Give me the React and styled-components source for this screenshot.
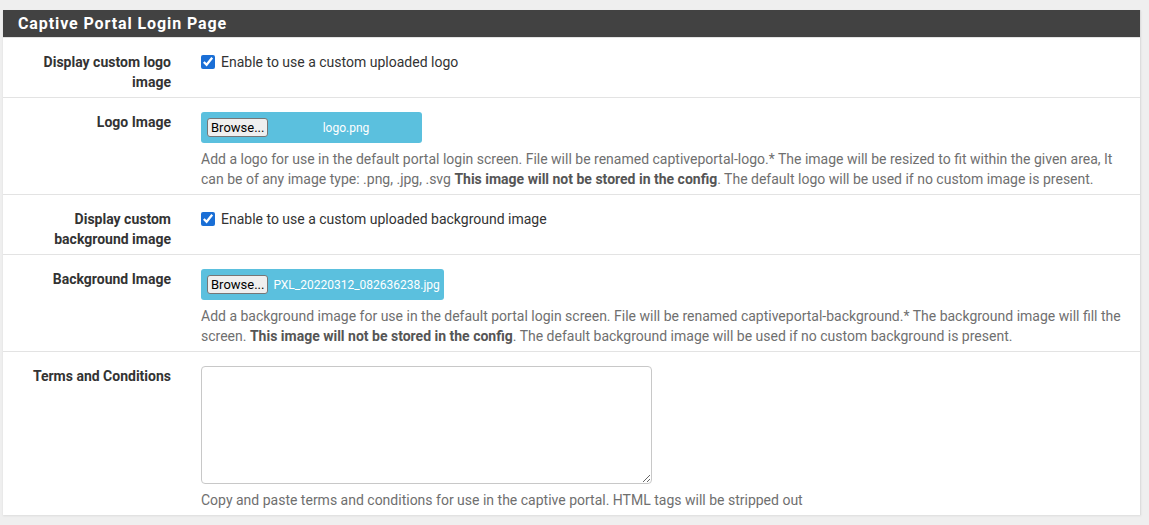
import React from 'react';
import styled, { createGlobalStyle } from 'styled-components';

const GlobalStyle = createGlobalStyle`
  body {
    margin: 0;
    background: #efefef;
    font-family: Roboto, "Liberation Sans", sans-serif;
    font-size: 14px;
    color: #333;
  }
`;

const Page = styled.div`
  padding: 10px 8px 10px 3px;
`;

const Panel = styled.div`
  background: #fff;
  border-right: 1px solid #ddd;
  box-shadow: 0 1px 2px rgba(0, 0, 0, 0.08);
`;

const Heading = styled.div`
  background: #424242;
  color: #fff;
  height: 27px;
  display: flex;
  align-items: center;
  padding-left: 15px;
  font-size: 16px;
  font-weight: 700;
  letter-spacing: 0.9px;
`;

const Row = styled.div`
  display: grid;
  grid-template-columns: 183px 1fr;
  padding: 14px 0 5px;
  border-top: 1px solid #e3e3e3;
`;

const Label = styled.div`
  text-align: right;
  font-weight: 700;
  line-height: 20px;
  padding: 0 15px 0 20px;
  color: #333;
`;

const Content = styled.div`
  padding: 0 10px 0 15px;
  line-height: 20px;
`;

const CheckLabel = styled.label`
  display: flex;
  align-items: center;
  gap: 6px;
  color: #333;

  input {
    margin: 0;
    width: 14px;
    height: 14px;
    accent-color: #1a6fd6;
  }
`;

const FileBox = styled.div`
  display: flex;
  width: fit-content;
  align-items: center;
  box-sizing: border-box;
  background: #5bc0de;
  border-radius: 3px;
  padding: 0 4px 0 6px;
  height: 31px;
`;

const Browse = styled.span`
  display: inline-block;
  background: #efefef;
  border: 1px solid #767676;
  border-radius: 3px;
  color: #000;
  font-size: 13px;
  line-height: 17px;
  padding: 0 3px;
`;

const FileName = styled.span`
  min-width: 145px;
  padding-left: 5px;
  text-align: center;
  color: #fff;
  font-size: 12px;
`;

const Help = styled.div`
  color: #6f6f6f;
  margin-top: 6px;

  b {
    color: #555;
  }
`;

const TextArea = styled.textarea`
  display: block;
  width: 451px;
  height: 118px;
  box-sizing: border-box;
  border: 1px solid #c8c8c8;
  border-radius: 4px;
  margin: 0;
  font-family: inherit;
`;

const FileInput = ({ name }) => (
  <FileBox>
    <Browse>Browse...</Browse>
    <FileName>{name}</FileName>
  </FileBox>
);

export default function App() {
  return (
    <Page>
      <GlobalStyle />
      <Panel>
        <Heading>Captive Portal Login Page</Heading>
        <Row>
          <Label>Display custom logo image</Label>
          <Content>
            <CheckLabel>
              <input type="checkbox" defaultChecked />
              Enable to use a custom uploaded logo
            </CheckLabel>
          </Content>
        </Row>
        <Row>
          <Label>Logo Image</Label>
          <Content>
            <FileInput name="logo.png" />
            <Help>
              Add a logo for use in the default portal login screen. File will be renamed captiveportal-logo.* The image will be resized to fit within the given area, It can be of any image type: .png, .jpg, .svg <b>This image will not be stored in the config</b>. The default logo will be used if no custom image is present.
            </Help>
          </Content>
        </Row>
        <Row>
          <Label>Display custom background image</Label>
          <Content>
            <CheckLabel>
              <input type="checkbox" defaultChecked />
              Enable to use a custom uploaded background image
            </CheckLabel>
          </Content>
        </Row>
        <Row>
          <Label>Background Image</Label>
          <Content>
            <FileInput name="PXL_20220312_082636238.jpg" />
            <Help>
              Add a background image for use in the default portal login screen. File will be renamed captiveportal-background.* The background image will fill the screen. <b>This image will not be stored in the config</b>. The default background image will be used if no custom background is present.
            </Help>
          </Content>
        </Row>
        <Row>
          <Label>Terms and Conditions</Label>
          <Content>
            <TextArea />
            <Help>
              Copy and paste terms and conditions for use in the captive portal. HTML tags will be stripped out
            </Help>
          </Content>
        </Row>
      </Panel>
    </Page>
  );
}
